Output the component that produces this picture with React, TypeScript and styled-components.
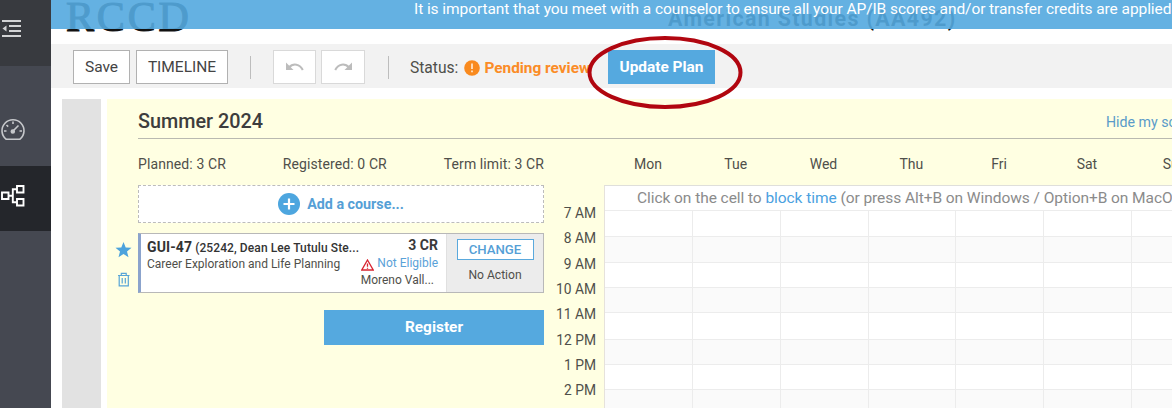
import React from "react";
import styled, { createGlobalStyle } from "styled-components";

const Global = createGlobalStyle`
  * { box-sizing: border-box; }
  body { margin: 0; background: #fff; overflow: hidden; font-family: Roboto, "Liberation Sans", sans-serif; color: #4f4f4a; }
`;

const Page = styled.div`
  display: flex;
  width: 1172px;
  height: 408px;
  overflow: hidden;
`;

const Sidebar = styled.nav`
  flex: 0 0 51px;
  display: flex;
  flex-direction: column;
  background: #454851;
`;

const NavItem = styled.div<{ $bg: string; $h: number; $top: number }>`
  height: ${(p) => p.$h}px;
  padding-top: ${(p) => p.$top}px;
  background: ${(p) => p.$bg};
  svg { display: block; }
`;

const Main = styled.main`
  flex: 1;
  min-width: 0;
  display: flex;
  flex-direction: column;
`;

const Header = styled.header`
  position: relative;
  flex: 0 0 44px;
  display: flex;
  align-items: flex-start;
  padding-left: 15px;
  overflow: hidden;
  color: #111;
`;

const Logo = styled.div`
  width: 602px;
  font: 42px/42px "Liberation Serif", serif;
  letter-spacing: 2.8px;
  -webkit-text-stroke: 1.2px #111;
  margin-top: -4px;
`;

const Program = styled.div`
  font-size: 21.5px;
  line-height: 24px;
  font-weight: 700;
  letter-spacing: 1.3px;
  margin-top: 7px;
  white-space: nowrap;
`;

const Banner = styled.div`
  position: absolute;
  inset: 0 0 auto 0;
  height: 29px;
  padding-left: 363px;
  background: rgba(85, 169, 223, 0.91);
  color: #fff;
  font-size: 15.5px;
  letter-spacing: -0.075px;
  line-height: 18px;
  white-space: nowrap;
`;

const Toolbar = styled.div`
  flex: 0 0 44px;
  display: flex;
  align-items: center;
  padding: 2px 0 0 22px;
  background: #f2f2f2;
  font-size: 15.6px;
`;

const ToolButton = styled.button<{ $w: number; $mr: number; $light?: boolean }>`
  width: ${(p) => p.$w}px;
  height: 34px;
  margin: 0 ${(p) => p.$mr}px 0 0;
  padding: 0 0 1px;
  display: flex;
  align-items: center;
  justify-content: center;
  border: 1px solid ${(p) => (p.$light ? "#d9d9d9" : "#b1b1b1")};
  background: #fff;
  color: #444;
  font: 15.5px Roboto, sans-serif;
`;

const Divider = styled.i<{ $mr: number }>`
  width: 1px;
  height: 23px;
  margin-right: ${(p) => p.$mr}px;
  background: #bdbdbd;
`;

const Status = styled.div`
  display: flex;
  align-items: center;
  width: 198px;
  padding-top: 1px;
  white-space: nowrap;
  svg { margin: 0 4px 0 6px; flex: none; }
  b { color: #fb8c27; font-weight: 700; font-size: 15.4px; }
`;

const UpdateWrap = styled.div`
  position: relative;
`;

const Primary = styled.button<{ $w: number; $h: number }>`
  display: block;
  width: ${(p) => p.$w}px;
  height: ${(p) => p.$h}px;
  padding: 0 0 1px;
  border: 0;
  background: #55a9df;
  color: #fff;
  font: 700 15.4px Roboto, sans-serif;
`;

const Ring = styled.svg`
  position: absolute;
  left: -21px;
  top: -15px;
  pointer-events: none;
`;

const Content = styled.div`
  flex: 1;
  display: flex;
  padding: 11px 0 0 11px;
`;

const Rail = styled.div`
  flex: 0 0 39px;
  margin-right: 6px;
  background: #e2e2e2;
`;

const Term = styled.section`
  flex: 1;
  min-width: 0;
  padding-left: 31px;
  background: #ffffe2;
`;

const TermHead = styled.div`
  display: flex;
  justify-content: space-between;
  height: 40px;
  margin-right: -42px;
  border-bottom: 1px solid #b9b9b0;
  white-space: nowrap;
`;

const TermTitle = styled.h2`
  margin: 0;
  font-size: 19.8px;
  line-height: 46px;
  font-weight: 500;
  color: #3d3d3d;
`;

const HideLink = styled.a`
  width: 108px;
  font-size: 14.2px;
  line-height: 46px;
  color: #5a9bc9;
`;

const Columns = styled.div`
  display: flex;
`;

const Plan = styled.div`
  flex: 0 0 406px;
`;

const Totals = styled.div`
  display: flex;
  justify-content: space-between;
  height: 46px;
  font-size: 14px;
  line-height: 50px;
  letter-spacing: 0.1px;
`;

const AddCourse = styled.div`
  display: flex;
  align-items: center;
  justify-content: center;
  height: 38px;
  border: 1px dashed #bcbcbc;
  background: #fff;
  color: #559fd6;
  font-size: 14.3px;
  font-weight: 700;
  svg { margin-right: 7px; }
`;

const CourseRow = styled.div`
  display: flex;
  margin: 10px 0 17px -23px;
  height: 60px;
`;

const RowIcons = styled.div`
  flex: 0 0 23px;
  padding-top: 9px;
  svg { display: block; }
  svg + svg { margin-top: 14px; }
`;

const Card = styled.div`
  flex: 1;
  display: flex;
  border: 1px solid #b8b8b8;
  border-left: 3px solid #8ba3cc;
  background: #fff;
  white-space: nowrap;
`;

const CourseInfo = styled.div`
  width: 217px;
  padding: 4px 0 0 6px;
  font-size: 12px;
  line-height: 17px;
`;

const CourseTitle = styled.div`
  color: #333;
  font-weight: 500;
  font-size: 12px;
  line-height: 18px;
  margin-bottom: -1px;
  letter-spacing: 0.1px;
  b { font-size: 14px; font-weight: 700; }
`;

const CourseMeta = styled.div`
  width: 88px;
  padding: 2px 8px 0 0;
  display: flex;
  flex-direction: column;
  align-items: flex-end;
  font-size: 12px;
  line-height: 17px;
`;

const Credits = styled.b`
  font-size: 14px;
  font-weight: 700;
  line-height: 19px;
  color: #3a3a3a;
`;

const Eligibility = styled.span`
  display: flex;
  align-items: center;
  color: #5aa2d8;
  svg { margin: 3px 3px 0 0; }
`;

const Campus = styled.span`
  margin-right: 4px;
  font-size: 12px;
`;

const CourseAction = styled.div`
  flex: 1;
  display: flex;
  flex-direction: column;
  align-items: center;
  padding-top: 5px;
  border-left: 1px solid #e0e0e0;
  background: #ececec;
  font-size: 12.1px;
  line-height: 34px;
  span { margin-top: -2px; }
`;

const ChangeButton = styled.button`
  width: 77px;
  height: 22px;
  padding: 0;
  border: 1px solid #5aa9dd;
  background: #fff;
  color: #559fd6;
  font: 500 13.2px Roboto, sans-serif;
`;

const RegisterRow = styled.div`
  display: flex;
  justify-content: flex-end;
`;

const Hours = styled.div`
  flex: 0 0 60px;
  padding: 62px 8px 0 0;
  text-align: right;
  font-size: 13.8px;
  line-height: 25.35px;
`;

const Schedule = styled.div`
  flex: 1;
  min-width: 0;
  overflow: hidden;
`;

const Days = styled.div`
  display: grid;
  grid-template-columns: repeat(7, 87.8px);
  height: 46px;
  font-size: 14px;
  line-height: 50px;
  text-align: center;
`;

const Hint = styled.div`
  height: 25px;
  padding-left: 32px;
  border-top: 1px solid #dfdfdb;
  border-left: 1px solid #e6e2dc;
  background: #fff;
  color: #8b8b8b;
  font-size: 15.5px;
  letter-spacing: -0.06px;
  line-height: 24px;
  white-space: nowrap;
  a { color: #4ba1df; }
`;

const Slots = styled.div`
  display: grid;
  grid-template-columns: 88px repeat(6, 87.8px);
  grid-template-rows: 26px 26px 25px 25px 27px 25px 25px 26px;
  border-left: 1px solid #e6e2dc;
`;

const Slot = styled.div<{ $shade: boolean }>`
  border-top: 1px solid #ececec;
  border-right: 1px solid #ececec;
  background: ${(p) => (p.$shade ? "#fafafa" : "#fff")};
`;

const HOURS = ["7 AM", "8 AM", "9 AM", "10 AM", "11 AM", "12 PM", "1 PM", "2 PM"];
const DAYS = ["Mon", "Tue", "Wed", "Thu", "Fri", "Sat", "Sun"];

const MenuIcon = () => (
  <svg width="24" height="20" viewBox="0 0 24 20" stroke="#d2d3d5" strokeWidth="2">
    <path d="M2 2H21M9 7H21M9 12H21M2 17H21" />
    <path d="M2.5 9.5L6.5 6.5V12.5Z" fill="#d2d3d5" stroke="none" />
  </svg>
);

const GaugeIcon = () => (
  <svg width="26" height="24" viewBox="0 0 26 24" fill="none" stroke="#c6c8cb" strokeWidth="1.6">
    <path d="M6 21.2A11 11 0 1 1 20 21.2Z" strokeLinejoin="round" />
    <path d="M13 3.5V6M4 13H6.5M19.5 13H22M6.5 7L8.2 8.6M12.5 13.5L18.5 7.5" />
    <circle cx="12.8" cy="13.5" r="1.5" fill="#c6c8cb" />
  </svg>
);

const TreeIcon = () => (
  <svg width="26" height="24" viewBox="0 0 26 24" fill="none" stroke="#fff" strokeWidth="1.9">
    <path d="M2 8.5H8.5V15H2ZM17 2H23.5V8.5H17ZM17 15H23.5V21.5H17ZM8.5 11.8H12.8M17 5.3H12.8V18.3H17" />
  </svg>
);

const UndoIcon = ({ flip = false }: { flip?: boolean }) => (
  <svg width="20" height="12" viewBox="0 0 20 12">
    <g transform={flip ? "translate(20 0) scale(-1 1)" : undefined}>
      <path d="M4 6.5C8 1.8 15 2.8 17.8 9" fill="none" stroke="#bcbcbc" strokeWidth="2" />
      <path d="M1 1.5V9H8.5Z" fill="#bcbcbc" />
    </g>
  </svg>
);

export default function App() {
  return (
    <>
      <Global />
      <Page>
        <Sidebar>
          <NavItem $bg="#383a3f" $h={66} $top={19}><MenuIcon /></NavItem>
          <NavItem $bg="#454851" $h={100} $top={52}><GaugeIcon /></NavItem>
          <NavItem $bg="#24262b" $h={65} $top={18}><TreeIcon /></NavItem>
        </Sidebar>
        <Main>
          <Header>
            <Logo>RCCD</Logo>
            <Program>American Studies (AA492)</Program>
            <Banner>It is important that you meet with a counselor to ensure all your AP/IB scores and/or transfer credits are applied</Banner>
          </Header>
          <Toolbar>
            <ToolButton $w={57} $mr={6}>Save</ToolButton>
            <ToolButton $w={92} $mr={22}>TIMELINE</ToolButton>
            <Divider $mr={22} />
            <ToolButton $w={43} $mr={5} $light><UndoIcon /></ToolButton>
            <ToolButton $w={44} $mr={23} $light><UndoIcon flip /></ToolButton>
            <Divider $mr={21} />
            <Status>
              Status:
              <svg width="16" height="16" viewBox="0 0 16 16">
                <circle cx="8" cy="8" r="7.8" fill="#f98a1e" />
                <path d="M8 3.5V9M8 10.5V12.3" stroke="#ffe3c5" strokeWidth="1.8" />
              </svg>
              <b>Pending review</b>
            </Status>
            <UpdateWrap>
              <Primary $w={107} $h={34}>Update Plan</Primary>
              <Ring width="156" height="76" viewBox="0 0 156 76">
                <ellipse cx="78" cy="37.5" rx="75.5" ry="34.5" fill="none" stroke="#b10610" strokeWidth="4" />
              </Ring>
            </UpdateWrap>
          </Toolbar>
          <Content>
            <Rail />
            <Term>
              <TermHead>
                <TermTitle>Summer 2024</TermTitle>
                <HideLink>Hide my schedule</HideLink>
              </TermHead>
              <Columns>
                <Plan>
                  <Totals>
                    <span>Planned: 3 CR</span>
                    <span>Registered: 0 CR</span>
                    <span>Term limit: 3 CR</span>
                  </Totals>
                  <AddCourse>
                    <svg width="22" height="22" viewBox="0 0 22 22">
                      <circle cx="11" cy="11" r="11" fill="#4da6df" />
                      <path d="M11 5.5V16.5M5.5 11H16.5" stroke="#fff" strokeWidth="2.2" />
                    </svg>
                    Add a course...
                  </AddCourse>
                  <CourseRow>
                    <RowIcons>
                      <svg width="17" height="16" viewBox="0 0 17 16">
                        <path d="M8.5 0L10.7 5.4L16.5 5.8L12 9.5L13.5 15.2L8.5 12.1L3.5 15.2L5 9.5L.5 5.8L6.3 5.4Z" fill="#4da3dc" />
                      </svg>
                      <svg width="17" height="16" viewBox="0 0 17 16" fill="none" stroke="#58a5d7" strokeWidth="1.2">
                        <path d="M3 3.5H14.5M6.3 3.2V1.3H11.2V3.2M4.2 3.8V13.8H13.3V3.8M7.2 6V11.5M10.3 6V11.5" />
                      </svg>
                    </RowIcons>
                    <Card>
                      <CourseInfo>
                        <CourseTitle><b>GUI-47</b> (25242, Dean Lee Tutulu Ste...</CourseTitle>
                        Career Exploration and Life Planning
                      </CourseInfo>
                      <CourseMeta>
                        <Credits>3 CR</Credits>
                        <Eligibility>
                          <svg width="13" height="12" viewBox="0 0 13 12" fill="none" stroke="#d8232f" strokeWidth="1.3">
                            <path d="M6.5 1L12.2 11H.8ZM6.5 4.5V7.8M6.5 8.7V9.8" />
                          </svg>
                          Not Eligible
                        </Eligibility>
                        <Campus>Moreno Vall...</Campus>
                      </CourseMeta>
                      <CourseAction>
                        <ChangeButton>CHANGE</ChangeButton>
                        <span>No Action</span>
                      </CourseAction>
                    </Card>
                  </CourseRow>
                  <RegisterRow><Primary $w={220} $h={35}>Register</Primary></RegisterRow>
                </Plan>
                <Hours>{HOURS.map((h) => <div key={h}>{h}</div>)}</Hours>
                <Schedule>
                  <Days>{DAYS.map((d) => <span key={d}>{d}</span>)}</Days>
                  <Hint>Click on the cell to <a>block time</a> (or press Alt+B on Windows / Option+B on MacOS)</Hint>
                  <Slots>
                    {HOURS.map((h, row) => DAYS.map((d) => <Slot key={h + d} $shade={row % 2 === 1} />))}
                  </Slots>
                </Schedule>
              </Columns>
            </Term>
          </Content>
        </Main>
      </Page>
    </>
  );
}
